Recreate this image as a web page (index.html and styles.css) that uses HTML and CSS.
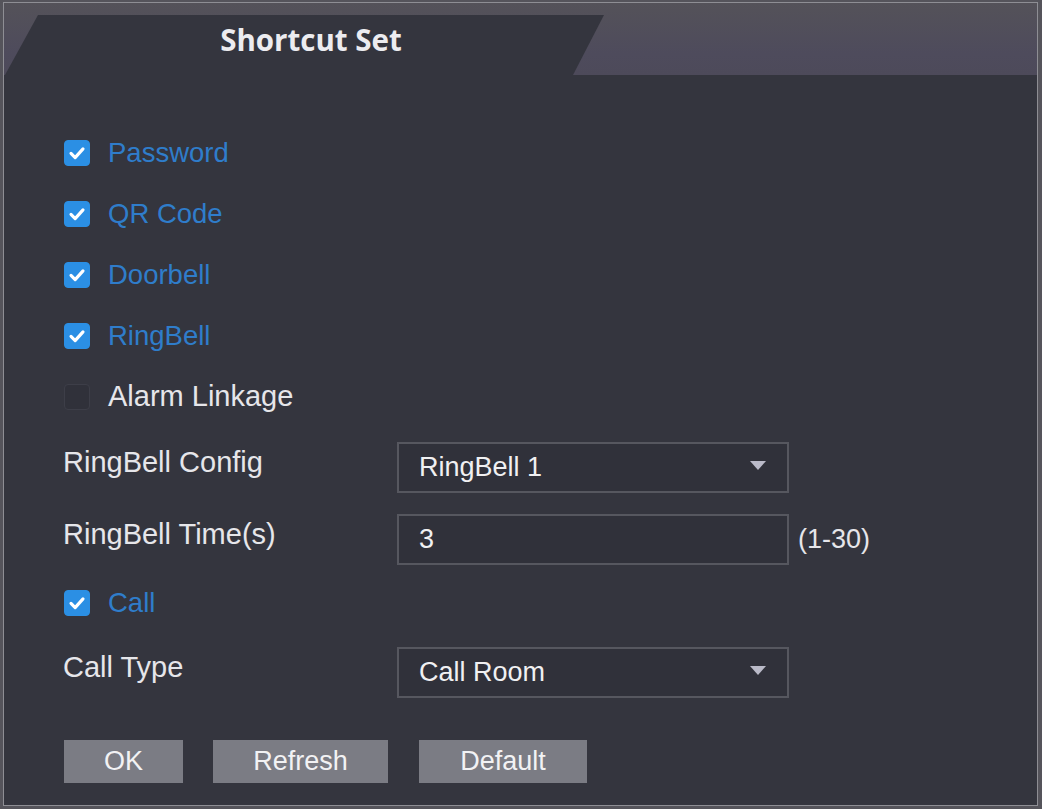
FILE: index.html
```html
<!DOCTYPE html>
<html>
<head>
  <title>Shortcut Set</title>
  <meta name="viewport" content="width=device-width, initial-scale=1.0">
  <link rel="stylesheet" href="styles.css">
</head>
<body>
  <div class="frame">
    <div class="tabbar">
      <div class="tab">Shortcut Set</div>
    </div>

    <form class="panel">
      <label class="check on">
        <span class="box"><svg viewBox="0 0 26 26"><polyline points="6.5,13.5 11,18 19.5,8.5"/></svg></span>
        Password
      </label>
      <label class="check on">
        <span class="box"><svg viewBox="0 0 26 26"><polyline points="6.5,13.5 11,18 19.5,8.5"/></svg></span>
        QR Code
      </label>
      <label class="check on">
        <span class="box"><svg viewBox="0 0 26 26"><polyline points="6.5,13.5 11,18 19.5,8.5"/></svg></span>
        Doorbell
      </label>
      <label class="check on">
        <span class="box"><svg viewBox="0 0 26 26"><polyline points="6.5,13.5 11,18 19.5,8.5"/></svg></span>
        RingBell
      </label>
      <label class="check">
        <span class="box"></span>
        Alarm Linkage
      </label>

      <div class="field first">
        <span class="name">RingBell Config</span>
        <div class="select">RingBell 1<span class="caret"></span></div>
      </div>
      <div class="field">
        <span class="name">RingBell Time(s)</span>
        <div class="input">3</div>
        <span class="hint">(1-30)</span>
      </div>

      <label class="check on call">
        <span class="box"><svg viewBox="0 0 26 26"><polyline points="6.5,13.5 11,18 19.5,8.5"/></svg></span>
        Call
      </label>

      <div class="field">
        <span class="name">Call Type</span>
        <div class="select">Call Room<span class="caret"></span></div>
      </div>

      <div class="actions">
        <button type="button" class="btn ok">OK</button>
        <button type="button" class="btn refresh">Refresh</button>
        <button type="button" class="btn default">Default</button>
      </div>
    </form>
  </div>
</body>
</html>
```

FILE: styles.css
```css
html, body {
  margin: 0;
  padding: 0;
}

body {
  width: 1042px;
  height: 809px;
  overflow: hidden;
  background: #55545b;
  font-family: 'Liberation Sans', Arial, sans-serif;
}

.frame {
  box-sizing: border-box;
  height: 804px;
  margin: 2px 4px 0 3px;
  border: 1px solid #8e8e94;
  background: #34353e;
}

/* header strip with the slanted tab */
.tabbar {
  box-sizing: border-box;
  height: 72px;
  padding-top: 12px;
  background: linear-gradient(#545259, #4e4b5c 70%, #4d4a5a);
}

.tab {
  box-sizing: border-box;
  width: 599px;
  height: 60px;
  margin-left: 1px;
  padding: 6px 0 0 13px;
  background: #34353e;
  clip-path: polygon(33px 0, 599px 0, 568px 100%, 0 100%);
  text-align: center;
  font-family: 'Open Sans', sans-serif;
  font-weight: 700;
  font-size: 29.5px;
  line-height: 38px;
  color: #ececf0;
}

.panel {
  padding: 47px 0 0 60px;
  margin: 0;
}

/* checkbox rows */
.check {
  display: flex;
  align-items: center;
  gap: 18px;
  height: 61px;
  font-size: 27.5px;
  color: #e6e6ea;
}

.check.on {
  color: #2f7dcb;
}

.check:not(.on) {
  font-size: 29px;
}

.check.call {
  box-sizing: border-box;
  padding-bottom: 5px;
}

.box {
  box-sizing: border-box;
  width: 26px;
  height: 26px;
  border-radius: 4px;
  background: #30313a;
  border: 1px solid #3d3e48;
}

.check.on .box {
  background: #2b8fe4;
  border-color: #2b8fe4;
}

.box svg {
  display: block;
  width: 24px;
  height: 24px;
  fill: none;
  stroke: #fff;
  stroke-width: 3.4;
  stroke-linecap: round;
  stroke-linejoin: round;
}

/* label + control rows */
.field {
  display: flex;
  align-items: center;
  height: 72px;
  font-size: 27px;
  color: #e6e6ea;
}

.field.first {
  margin-top: 4px;
}

.name {
  width: 334px;
  margin-left: -1px;
  padding-bottom: 9px;
  font-size: 29px;
}

.select, .input {
  box-sizing: border-box;
  position: relative;
  width: 392px;
  height: 51px;
  padding-left: 20px;
  line-height: 47px;
  background: #30313a;
  border: 2px solid #56575f;
  color: #f0f0f2;
}

.caret {
  position: absolute;
  right: 21px;
  top: 17px;
  width: 0;
  height: 0;
  border-left: 8px solid transparent;
  border-right: 8px solid transparent;
  border-top: 9px solid #babac8;
}

.hint {
  margin-left: 9px;
  color: #e6e6ea;
}

.actions {
  display: flex;
  gap: 30px;
  margin-top: 32px;
}

.btn {
  height: 43px;
  border: none;
  padding: 0;
  background: #7b7c84;
  color: #f2f2f4;
  font-family: 'Liberation Sans', Arial, sans-serif;
  font-size: 27px;
}

.btn.ok { width: 119px; }
.btn.refresh { width: 175px; }
.btn.default { width: 168px; margin-left: 1px; }
```
